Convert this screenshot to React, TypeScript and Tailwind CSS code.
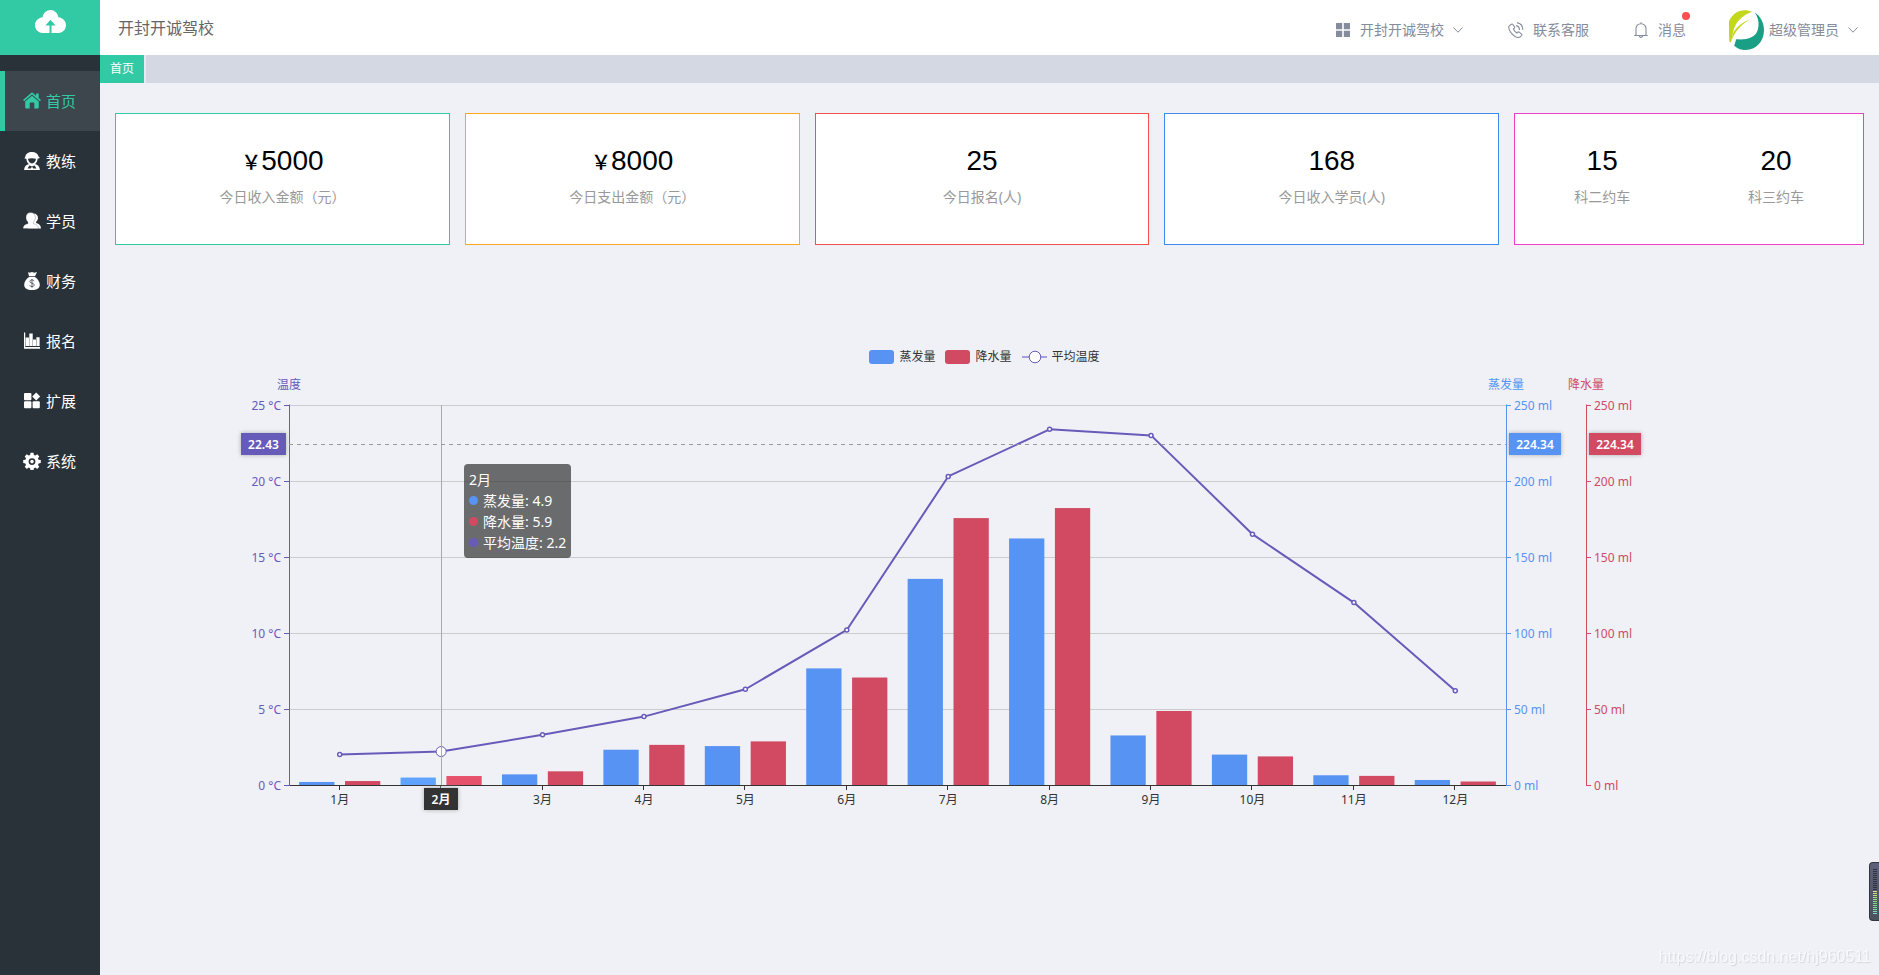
import React from "react";

const CJK = "font-['Noto_Sans','Noto_Sans_CJK_SC',sans-serif]";

const months = Array.from({ length: 12 }, (_, i) => `${i + 1}月`);
const evaporation = [2.0, 4.9, 7.0, 23.2, 25.6, 76.7, 135.6, 162.2, 32.6, 20.0, 6.4, 3.3];
const rainfall = [2.6, 5.9, 9.0, 26.4, 28.7, 70.7, 175.6, 182.2, 48.7, 18.8, 6.0, 2.3];
const temperature = [2.0, 2.2, 3.3, 4.5, 6.3, 10.2, 20.3, 23.4, 23.0, 16.5, 12.0, 6.2];

const icons: Record<string, React.ReactNode> = {
  home: (
    <>
      <path d="M9 .3 0 8.1l1.100 1.200L9 2.500l7.900 6.800L18 8.100l-2.300-2V1.600h-2.600v2.200z" />
      <path d="M9 3.700 2.200 9.500v5.700c0 .9.5 1.300 1.300 1.300h3.200v-5c0-.6.4-1 1-1h2.600c.6 0 1 .4 1 1v5h3.200c.8 0 1.300-.4 1.300-1.300V9.500z" />
    </>
  ),
  coach: (
    <path
      fillRule="evenodd"
      d="M9 0c3.500 0 6 1.800 6.600 4.600l1.200 1.100-.8.9h-1.300c-.2 2.500-1.200 4.400-2.700 5.500 2.900.8 4.800 2.600 4.900 5.900H1.100c.1-3.300 2-5.100 4.900-5.900C4.500 11 3.500 9.200 3.300 6.700L1.400 6.500 2.200 4.900C2.700 1.900 5.400 0 9 0zM5 6.800c.2 2.600 1.800 4.600 4 4.600s3.800-2 4-4.600c-2.700-.9-5.400-.9-8 0zM6.400 13.500 4.500 16.500h3.200L9 14.800l1.300 1.700h3.200l-1.900-3L9 14.600z"
    />
  ),
  student: (
    <>
      <path d="M10.600 1.600c2.400.1 4.400 1.600 4.400 4.200 0 1.700-.8 3.200-1.900 4v1.300c3.300 1 4.700 2.200 4.900 5.400H5z" />
      <path
        d="M7.600.6c2.900 0 4.800 2 4.800 4.800 0 1.900-.8 3.700-2 4.600v1.600c3.300 1 4.900 2.100 5 5H0c.1-2.900 1.700-4 5-5V10C3.800 9.100 3 7.300 3 5.400 3 2.600 4.800.6 7.600.6z"
        stroke="#283238"
        strokeOpacity=".5"
        strokeWidth=".5"
      />
    </>
  ),
  finance: (
    <>
      <path d="M5 0l1.400.8L9 0l2.400.8L14 .1 12 4.300H6zM6 5h6c2.700 1.800 4.800 4.700 4.800 7.800 0 3.600-2.800 5.200-7.800 5.200s-7.800-1.600-7.800-5.200C1.200 9.700 3.300 6.800 6 5z" />
      <path
        d="M11 9.300c-.3-1-1.100-1.400-2.100-1.400-1.200 0-2 .6-2 1.600 0 2.200 4.300 1.100 4.300 3.400 0 1-.9 1.700-2.200 1.700-1.200 0-2-.5-2.300-1.600M9 7v8.600"
        fill="none"
        stroke="#283238"
        strokeWidth=".7"
      />
    </>
  ),
  signup: <path d="M1 .5h1.200V15H17v1.700H1zM2.600 5.500H6V14H2.600zM6.300 1.500h3.400V14H6.300zM10 7.500h3V14h-3zM13.400 5.200h3.200V14h-3.200z" />,
  extend: (
    <>
      <rect x="1" y="1" width="7.400" height="7.200" rx="1" />
      <rect x="1" y="9.300" width="7.400" height="7" rx="1" />
      <rect x="9.600" y="9.300" width="7.200" height="7" rx="1" />
      <path d="M13.200.4 17.200 4.400 13.200 8.400 9.200 4.400z" />
    </>
  ),
  system: (
    <path
      fillRule="evenodd"
      d="M7.500.8h3l.4 2.200 1.400.6 1.900-1.300 2.100 2.100L15 6.300l.6 1.400 2.200.4v3l-2.200.4-.6 1.400 1.300 1.900-2.100 2.100-1.900-1.300-1.400.6-.4 2.200h-3l-.4-2.200-1.400-.6-1.900 1.300-2.100-2.100L3 12.900l-.6-1.400-2.200-.4v-3l2.200-.4L3 6.300 1.700 4.400l2.100-2.100 1.900 1.300L7.100 3zM9 6.200a3.400 3.400 0 1 0 0 6.800 3.400 3.400 0 0 0 0-6.800zm0 1.600a1.800 1.800 0 1 1 0 3.600 1.800 1.800 0 0 1 0-3.600z"
    />
  ),
};

const menu = [
  { key: "home", label: "首页" },
  { key: "coach", label: "教练" },
  { key: "student", label: "学员" },
  { key: "finance", label: "财务" },
  { key: "signup", label: "报名" },
  { key: "extend", label: "扩展" },
  { key: "system", label: "系统" },
];

function Sidebar() {
  return (
    <aside className="flex w-[100px] shrink-0 flex-col bg-[#283238]">
      <a href="#" aria-label="云平台" className="flex h-[55px] justify-center bg-[#32c9a5] pt-[10px]">
        <svg width="31" height="23" viewBox="0 0 31 23" fill="#fff">
          <path
            fillRule="evenodd"
            d="M15.500 0c4 0 7.200 2.900 7.900 7.200C28 7.800 31 11 31 15.100 31 19.500 27.900 23 23.500 23h-7v-7.500h4L15.500 9.800l-5 5.700h4V23H7.500C3.100 23 0 19.500 0 15.100 0 11 3 7.800 7.600 7.200 8.300 2.900 11.500 0 15.500 0z"
          />
        </svg>
      </a>
      <nav className="flex flex-col pt-4">
        {menu.map((m, i) => (
          <a
            key={m.key}
            href="#"
            className={
              i === 0
                ? "flex h-[60px] items-center gap-[5px] border-l-[5px] border-[#32c9a5] bg-[#3c464c] pl-[18px] text-[15px] text-[#32c9a5]"
                : "flex h-[60px] items-center gap-[5px] border-l-[5px] border-transparent pl-[18px] text-[15px] text-white"
            }
          >
            <svg width="18" height="18" viewBox="0 0 18 18" fill="currentColor" className="shrink-0">
              {icons[m.key]}
            </svg>
            {m.label}
          </a>
        ))}
      </nav>
    </aside>
  );
}

function Chevron() {
  return (
    <svg width="10" height="6" viewBox="0 0 10 6" fill="none" stroke="#8a909c" strokeWidth="1">
      <path d="M.5.5 5 5.200 9.500.5" />
    </svg>
  );
}

function Header() {
  return (
    <header className="flex h-[55px] items-center justify-between bg-white pr-[21px] pl-[18px]">
      <h1 className="text-base text-[#666]">开封开诚驾校</h1>
      <div className="flex items-center pt-[5px] text-sm text-[#858c9b]">
        <button className="flex items-center">
          <svg width="14" height="14" viewBox="0 0 14 14" fill="currentColor" className="mr-[10px]">
            <path d="M0 0h6.200v6.200H0zM7.800 0H14v6.200H7.800zM0 7.800h6.200V14H0zM7.800 7.800H14V14H7.800z" />
          </svg>
          <span className="mr-[9px]">开封开诚驾校</span>
          <Chevron />
        </button>
        <button className="ml-[45px] flex items-center">
          <svg width="16" height="16" viewBox="0 0 16 16" fill="none" stroke="currentColor" strokeWidth="1.100" className="mr-[9px]">
            <path d="M3.400 2.300 1.300 3.900C.2 5 .8 7.600 3 10.600c2.400 3.100 5.200 5 7.500 4.900 1 0 2.600-1.300 3.200-2 .4-.5.2-1-.2-1.400l-2.200-1.900c-.6-.4-1.100-.4-1.600.1l-.8.7C7.600 10.400 6.200 8.600 5.400 7l.9-.8c.4-.4.4-.9.1-1.400L4.900 2.500c-.4-.5-1-.6-1.500-.2z" />
            <path d="M8.100 3.600c2 .4 3.400 2.100 3.400 4.300M8.900.6c3.600.6 6 3.400 5.900 7.500" />
          </svg>
          联系客服
        </button>
        <button className="relative ml-[45px] flex items-center">
          <svg width="14" height="16" viewBox="0 0 14 16" fill="none" stroke="currentColor" strokeWidth="1.100" className="mr-[10px]">
            <path d="M.2 13.500h13.600M2 13.500V6.700C2 3.700 4 1.700 7 1.700s5 2 5 5v6.800M7 .2v1.500M5.300 13.800c.2 1 .8 1.600 1.700 1.600s1.500-.6 1.700-1.600" />
          </svg>
          消息
          <span className="absolute -top-2 -right-1 size-2 rounded-full bg-[#fb5050]" />
        </button>
        <button className="ml-[43px] flex items-center">
          <svg width="35" height="40" viewBox="0 0 35 40" className="-my-2 mr-[5px]">
            <path fill="#c3d81b" d="M0 11C3.500 4 9 .2 15.500.2c3.200 0 5.600.6 7.700 1.500C15 4.500 8.500 10 5.500 17.500 3.500 22.500 3.300 27 2 32.500L.3 31.500C0 29 0 17 0 11z" />
            <path fill="#c3d81b" d="M20.800 9.300C12 13 6.500 18 3.600 24.500L2.200 31.500C5.500 22.500 10.500 16 20.800 9.300z" />
            <path fill="#189f85" d="M25.800 2.600C31.500 6.500 35 12.700 35 20c0 11.500-8 20-18.500 20-4.600 0-8.300-1.600-11.300-4.300L7.200 29.300c10.500.8 19-1.300 21.500-9.300C30.500 14 29.500 8 25.800 2.600z" />
          </svg>
          <span className="mr-[9px]">超级管理员</span>
          <Chevron />
        </button>
      </div>
    </header>
  );
}

const cards = [
  { border: "border-[#32c9a5]", items: [{ yen: true, value: "5000", label: "今日收入金额（元）" }] },
  { border: "border-[#ffa81d]", items: [{ yen: true, value: "8000", label: "今日支出金额（元）" }] },
  { border: "border-[#f2504b]", items: [{ yen: false, value: "25", label: "今日报名(人)" }] },
  { border: "border-[#3f8aec]", items: [{ yen: false, value: "168", label: "今日收入学员(人)" }] },
  {
    border: "border-[#f03fc6]",
    items: [
      { yen: false, value: "15", label: "科二约车" },
      { yen: false, value: "20", label: "科三约车" },
    ],
  },
];

function Cards() {
  return (
    <ul className="grid grid-cols-5">
      {cards.map((c, i) => (
        <li key={i} className={i < 4 ? "pr-[15px]" : ""}>
          <div className={`flex h-[132px] border bg-white pt-[29px] ${c.border}`}>
            {c.items.map((it) => (
              <div key={it.label} className="flex-1 text-center">
                <p className="font-['Liberation_Sans','Noto_Sans_CJK_SC',sans-serif] text-[28px] leading-[36px] text-black">
                  {it.yen && <span className="text-[20px] leading-[20px] font-medium">￥</span>}
                  {it.value}
                </p>
                <p className="mt-2 text-sm leading-5 text-[#999]">{it.label}</p>
              </div>
            ))}
          </div>
        </li>
      ))}
    </ul>
  );
}

const LEFT = 174;
const RIGHT = 1391;
const FAR = 1471;
const TOP = 30;
const BOTTOM = 410;
const BAND = (RIGHT - LEFT) / 12;
const BAR = (BAND * 0.8) / 2.3;
const cx = (i: number) => LEFT + BAND * (i + 0.5);
const barX = (i: number, s: number) => LEFT + BAND * i + BAND * 0.1 + s * BAR * 1.3;
const yOf = (v: number, max: number) => BOTTOM - (v / max) * (BOTTOM - TOP);
const ticks = [0, 1, 2, 3, 4, 5];
const FOCUS = 1;

function Badge({ x, y, w, fill, text }: { x: number; y: number; w: number; fill: string; text: string }) {
  return (
    <g>
      <rect x={x} y={y} width={w} height="22" fill={fill} className="drop-shadow-[0_0_2px_#aaa]" />
      <text x={x + w / 2} y={y + 16} fill="#fff" fontWeight="600" textAnchor="middle">{text}</text>
    </g>
  );
}

function Chart() {
  const pointerY = yOf(22.43, 25);
  return (
    <section className="relative mt-[100px] mr-[10px]">
      <div className="flex h-[30px] items-start justify-center gap-[10px] pt-[5px] text-xs leading-[14px] text-[#333]">
        <button className="flex items-center gap-[5px]">
          <span className="h-[14px] w-[25px] rounded-[3px] bg-[#5793f3]" />
          蒸发量
        </button>
        <button className="flex items-center gap-[5px]">
          <span className="h-[14px] w-[25px] rounded-[3px] bg-[#d14a61]" />
          降水量
        </button>
        <button className="flex items-center gap-[5px]">
          <svg width="25" height="14" viewBox="0 0 25 14">
            <path d="M0 7h25" stroke="#a79fdb" strokeWidth="2" />
            <circle cx="13" cy="7" r="5.800" fill="#fff" stroke="#675bba" />
          </svg>
          平均温度
        </button>
      </div>
      <svg viewBox="0 0 1739 470" className="block w-full text-[12px]">
        {ticks.slice(1).map((t) => (
          <line key={t} x1={LEFT} x2={RIGHT} y1={yOf(t, 5) + 0.5} y2={yOf(t, 5) + 0.5} stroke="#ccc" />
        ))}
        {months.map((m, i) => (
          <g key={m}>
            <rect x={barX(i, 0)} y={yOf(evaporation[i], 250)} width={BAR} height={BOTTOM - yOf(evaporation[i], 250)} fill={i === FOCUS ? "#60a2ff" : "#5793f3"} />
            <rect x={barX(i, 1)} y={yOf(rainfall[i], 250)} width={BAR} height={BOTTOM - yOf(rainfall[i], 250)} fill={i === FOCUS ? "#e6516b" : "#d14a61"} />
            <path d={`M${Math.round(cx(i)) - 0.5} ${BOTTOM}v5`} stroke="#333" />
            <text x={cx(i)} y="429" fill="#333" textAnchor="middle">{m}</text>
          </g>
        ))}
        <path d={`M${LEFT} ${BOTTOM + 0.5}H${RIGHT}`} stroke="#333" />

        <path d={`M${LEFT + 0.5} ${TOP - 0.5}V${BOTTOM + 1}`} stroke="#675bba" />
        <path d={`M${RIGHT + 0.5} ${TOP - 0.5}V${BOTTOM + 1}`} stroke="#5793f3" />
        <path d={`M${FAR + 0.5} ${TOP - 0.5}V${BOTTOM + 1}`} stroke="#d14a61" />
        {ticks.map((t) => {
          const y = yOf(t, 5);
          return (
            <g key={t}>
              <path d={`M${LEFT - 5} ${y + 0.5}h5`} stroke="#675bba" />
              <path d={`M${RIGHT} ${y + 0.5}h5`} stroke="#5793f3" />
              <path d={`M${FAR} ${y + 0.5}h5`} stroke="#d14a61" />
              <text x={LEFT - 8} y={y + 5} fill="#675bba" textAnchor="end">{`${t * 5} °C`}</text>
              <text x={RIGHT + 8} y={y + 5} fill="#5793f3">{`${t * 50} ml`}</text>
              <text x={FAR + 8} y={y + 5} fill="#d14a61">{`${t * 50} ml`}</text>
            </g>
          );
        })}
        <text x={LEFT} y="14" fill="#675bba" textAnchor="middle">温度</text>
        <text x={RIGHT} y="14" fill="#5793f3" textAnchor="middle">蒸发量</text>
        <text x={FAR} y="14" fill="#d14a61" textAnchor="middle">降水量</text>

        <polyline
          points={temperature.map((v, i) => `${cx(i)},${yOf(v, 25)}`).join(" ")}
          fill="none"
          stroke="#675bba"
          strokeWidth="2"
          strokeLinejoin="bevel"
        />
        {temperature.map((v, i) => (
          <circle key={i} cx={cx(i)} cy={yOf(v, 25)} r={i === FOCUS ? 5 : 2} fill="#fff" stroke="#675bba" strokeWidth={i === FOCUS ? 1 : 1.5} />
        ))}

        <path d={`M${Math.round(cx(FOCUS)) + 0.5} ${TOP}V${BOTTOM}`} stroke="#aaa" />
        <path d={`M${LEFT} ${Math.round(pointerY) + 0.5}H${RIGHT}`} stroke="#999" strokeDasharray="4 4" />
        <Badge x={126} y={58} w={45} fill="#675bba" text="22.43" />
        <Badge x={1394} y={58} w={52} fill="#5793f3" text="224.34" />
        <Badge x={1474} y={58} w={52} fill="#d14a61" text="224.34" />
        <Badge x={309} y={413} w={34} fill="#333" text="2月" />
      </svg>
      <div className="absolute top-[119px] left-[349px] rounded-[4px] bg-[#323232]/70 p-[5px] text-sm leading-[21px] whitespace-nowrap text-white">
        <p>2月</p>
        <p className="flex items-center gap-[5px]"><span className="size-[9px] rounded-full bg-[#5793f3]" />蒸发量: 4.9</p>
        <p className="flex items-center gap-[5px]"><span className="size-[9px] rounded-full bg-[#d14a61]" />降水量: 5.9</p>
        <p className="flex items-center gap-[5px]"><span className="size-[9px] rounded-full bg-[#675bba]" />平均温度: 2.2</p>
      </div>
    </section>
  );
}

const meter = Array.from({ length: 23 }, (_, i) => i);

export default function App() {
  return (
    <div className={`flex min-h-screen bg-[#eff1f6] ${CJK}`}>
      <Sidebar />
      <div className="flex min-w-0 flex-1 flex-col">
        <Header />
        <div className="flex h-7 bg-[#d3d8e2]">
          <button className="border-r-2 border-[#e6e9f2] bg-[#32c9a5] bg-clip-padding px-[10px] text-xs text-white">首页</button>
        </div>
        <main className="px-[15px] pt-[30px]">
          <Cards />
          <Chart />
        </main>
      </div>
      <p className="fixed right-2 bottom-[6px] font-['Liberation_Sans',sans-serif] text-base text-[#f8f9fb] [text-shadow:1px_1px_1px_#d4d6dc]">
        https://blog.csdn.net/hj960511
      </p>
      <div className="fixed right-0 bottom-[54px] h-[59px] w-[10px] rounded-l-[4px] border border-r-0 border-[#32343f] bg-linear-to-b from-[#5d6079] to-[#4a525c]">
        <svg width="9" height="57" viewBox="0 0 9 57">
          {meter.map((i) => (
            <rect key={i} x="3" y={6 + i * 2} width="4" height="1" fill={i < 11 ? "#2f3140" : `hsl(${60 + (i - 11) * 10} 65% 68%)`} />
          ))}
        </svg>
      </div>
    </div>
  );
}
